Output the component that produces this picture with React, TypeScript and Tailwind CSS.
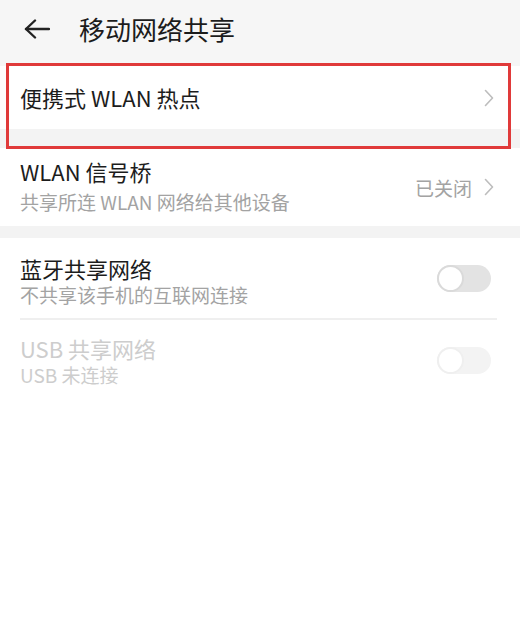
const FONT = "font-['Noto_Sans_CJK_SC','Noto_Sans',sans-serif]";

function Chevron() {
  return (
    <svg width="10" height="18" viewBox="0 0 10 18" fill="none">
      <polyline points="1.5,1.5 8.5,9 1.5,16.5" stroke="#bdbdbd" strokeWidth="1.6" strokeLinecap="round" strokeLinejoin="round" />
    </svg>
  );
}

function Toggle({ disabled }: { disabled?: boolean }) {
  return (
    <div className={`w-[54px] h-[27px] rounded-full flex items-center ${disabled ? "bg-[#f3f3f3]" : "bg-[#e3e3e3]"}`}>
      <div className={`w-[27px] h-[27px] rounded-full bg-white border-2 ${disabled ? "border-[#efefef]" : "border-[#dadada]"}`} />
    </div>
  );
}

export default function App() {
  return (
    <div className={`${FONT} w-[520px] h-[622px] bg-white relative overflow-hidden`}>
      {/* Header */}
      <div className="bg-[#f6f6f6] h-[66px] flex items-start">
        <div className="h-[58px] flex items-center pl-[24px] gap-[29px]">
          <svg width="26" height="20" viewBox="0 0 26 20" fill="none">
            <line x1="2" y1="10" x2="25" y2="10" stroke="#222" strokeWidth="2.4" strokeLinecap="round" />
            <polyline points="11,1.5 2,10 11,18.5" stroke="#222" strokeWidth="2.4" strokeLinecap="round" strokeLinejoin="round" />
          </svg>
          <span className="text-[26px] text-[#1c1c1c] leading-none">移动网络共享</span>
        </div>
      </div>

      {/* 便携式 WLAN 热点 */}
      <div className="bg-white h-[63px] flex items-center justify-between pl-[20px] pr-[26px]">
        <span className="text-[22px] text-[#1c1c1c] leading-none -mt-[2px]">便携式 WLAN 热点</span>
        <Chevron />
      </div>
      <div className="h-[19px] bg-[#f3f3f3]" />

      {/* WLAN 信号桥 */}
      <div className="bg-white h-[78px] flex items-start justify-between pl-[20px] pr-[26px]">
        <div className="flex flex-col pt-[8px]">
          <span className="text-[22px] text-[#1c1c1c] leading-[30px]">WLAN 信号桥</span>
          <span className="text-[19px] text-[#a3a3a3] leading-[28px] mt-[2px]">共享所连 WLAN 网络给其他设备</span>
        </div>
        <div className="self-center flex items-center gap-[12px]">
          <span className="text-[19px] text-[#a3a3a3] leading-none">已关闭</span>
          <Chevron />
        </div>
      </div>
      <div className="h-[12px] bg-[#f3f3f3]" />

      {/* 蓝牙共享网络 */}
      <div className="pl-[20px]">
        <div className="h-[82px] flex items-start justify-between pr-[6px] border-b-2 border-[#efefef] mr-[23px]">
          <div className="flex flex-col pt-[15px]">
            <span className="text-[22px] text-[#1c1c1c] leading-[30px]">蓝牙共享网络</span>
            <span className="text-[19px] text-[#a3a3a3] leading-[24px]">不共享该手机的互联网连接</span>
          </div>
          <div className="self-center mt-[1px]">
            <Toggle />
          </div>
        </div>
        <div className="h-[82px] flex items-start justify-between pr-[29px]">
          <div className="flex flex-col pt-[13px]">
            <span className="text-[22px] text-[#cdcdcd] leading-[30px]">USB 共享网络</span>
            <span className="text-[19px] text-[#cdcdcd] leading-[24px]">USB 未连接</span>
          </div>
          <div className="self-center -mt-[2px]">
            <Toggle disabled />
          </div>
        </div>
      </div>

      {/* annotation box */}
      <div className="absolute left-[6px] top-[63px] w-[505px] h-[86px] border-[3px] border-[#e03a3a] pointer-events-none" />
    </div>
  );
}
